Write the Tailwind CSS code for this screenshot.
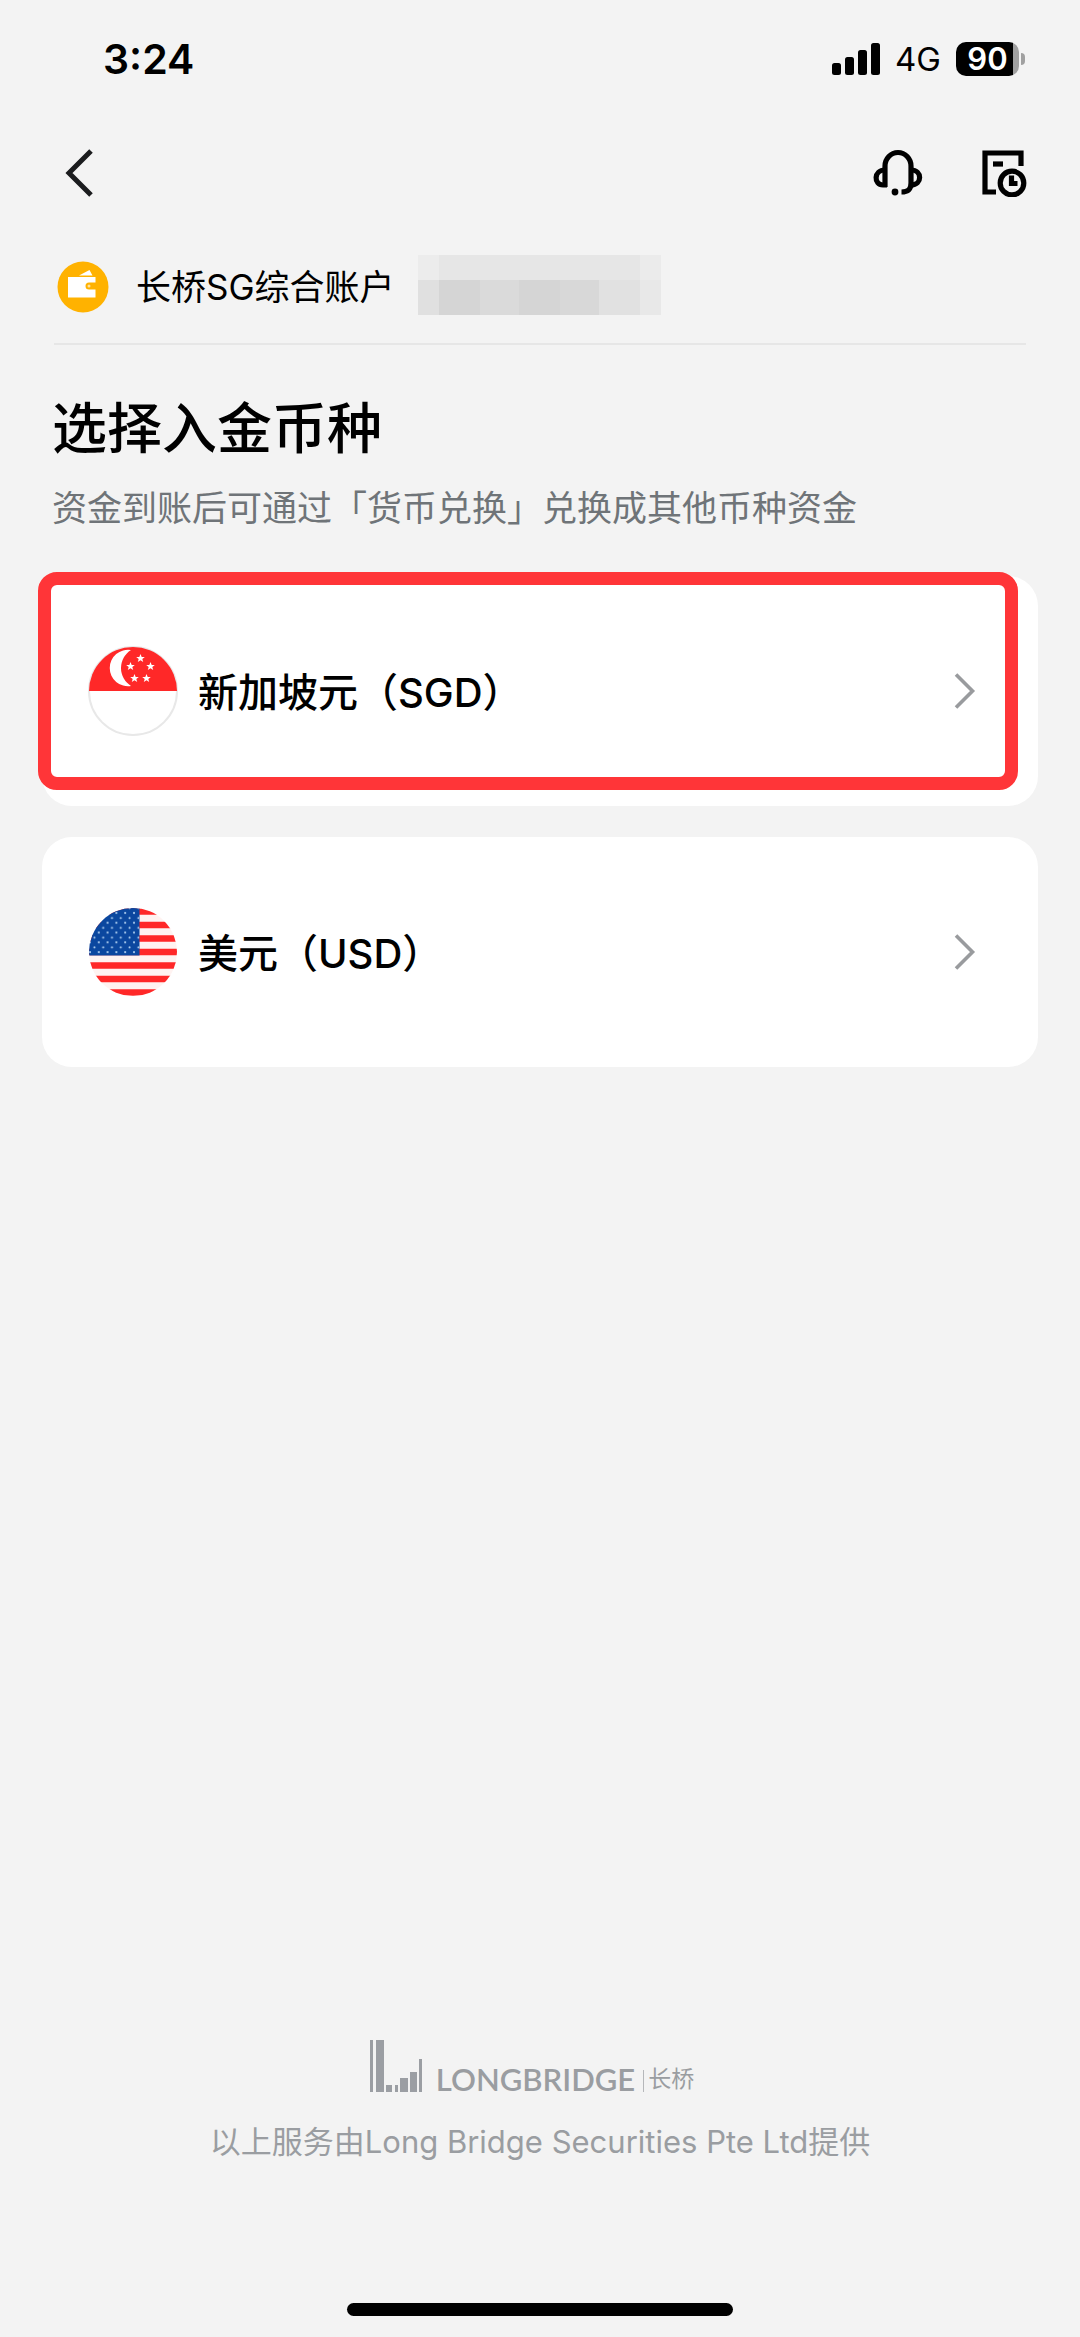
<!DOCTYPE html>
<html lang="zh-CN">
<head>
<meta charset="utf-8">
<meta name="viewport" content="width=device-width, initial-scale=1">
<title>选择入金币种</title>
<script src="https://cdn.jsdelivr.net/npm/@tailwindcss/browser@4"></script>
</head>
<body class="min-h-screen flex flex-col bg-[#f3f3f3] text-black font-['Inter','Noto_Sans_CJK_SC',sans-serif]">
  <!-- Status bar -->
  <div class="h-[118px] pl-[103px] pr-[55px] flex items-center justify-between">
    <span class="text-[41px] leading-[50px] font-semibold">3:24</span>
    <div class="flex items-center gap-[15px]">
      <svg class="w-12 h-8" viewBox="0 0 48 32" aria-hidden="true">
        <rect x="0" y="20" width="9" height="12" rx="2.5"/><rect x="13" y="14" width="9" height="18" rx="2.5"/><rect x="26" y="7" width="9" height="25" rx="2.5"/><rect x="39" y="0" width="9" height="32" rx="2.5"/>
      </svg>
      <span class="text-[33px] leading-10">4G</span>
      <div class="flex items-center gap-[2px]">
        <div class="w-[63px] h-[34px] rounded-[10px] flex items-center justify-center text-white text-[31px] leading-[34px] font-semibold bg-linear-to-r from-black from-90% to-[#a0a0a0] to-90%">90</div>
        <div class="w-1 h-3 rounded-r-full bg-[#a0a0a0]"></div>
      </div>
    </div>
  </div>

  <!-- Navigation bar -->
  <header class="h-[110px] pl-16 pr-[53px] flex items-center justify-between">
    <button type="button" aria-label="返回">
      <svg class="w-8 h-12" viewBox="0 0 32 48" fill="none" stroke="#1b1c1e" stroke-width="5"><path d="M27 2 L5 24 L27 46"/></svg>
    </button>
    <div class="flex items-center gap-[58px]">
      <button type="button" aria-label="客服">
        <svg class="w-[50px] h-12" viewBox="0 0 50 48" fill="none" stroke="#000" stroke-width="5.200">
          <path d="M12 38 V17 A13 13.500 0 0 1 38 17 V34 C38 40 35.500 43 28.500 43"/>
          <path d="M12 21 C0.500 21 0.500 36 10 36 H14"/><path d="M38 21 C49.500 21 49.500 36 38 36"/>
          <circle cx="22" cy="43" r="3.400" fill="#000" stroke="none"/>
        </svg>
      </button>
      <button type="button" aria-label="入金记录">
        <svg class="w-[46px] h-12" viewBox="0 0 46 48" fill="none" stroke="#000" stroke-width="5.200">
          <path d="M15 43 H4 V4 H40 V17"/><path d="M12 15 H22"/>
          <circle cx="31" cy="34" r="11.800"/><path d="M30.500 26.500 V34.500 H36.500"/>
        </svg>
      </button>
    </div>
  </header>

  <main class="px-[42px]">
    <!-- Account -->
    <section class="mx-3 h-[117px] pl-[3px] pt-[27px] flex items-start border-b-2 border-[#e6e6e6]">
      <div class="h-16 flex items-center">
        <svg class="w-[52px] h-[52px]" viewBox="0 0 52 52" aria-hidden="true">
          <circle cx="26" cy="26" r="25.500" fill="#ffb200"/>
          <path d="M22 14.500 L32.500 9 L35.500 14.500 Z M11 16 H38.500 V21.500 H32 A3.400 3.400 0 0 0 32 28.500 H38.500 V36.500 H11 Z" fill="#fff"/>
          <circle cx="32" cy="25" r="1.500" fill="#ffe2a0"/>
        </svg>
        <span class="ml-[27px] text-[35px] leading-[60px]">长桥SG综合账户</span>
      </div>
      <svg class="ml-[23px] w-[243px] h-[60px]" viewBox="0 0 243 60" aria-hidden="true">
        <rect width="243" height="60" fill="#e6e6e6"/>
        <rect width="21" height="25" fill="#ececec"/><rect x="222" width="21" height="25" fill="#ebebeb"/>
        <rect y="25" width="21" height="35" fill="#e0e0e0"/><rect x="21" y="25" width="41" height="35" fill="#d5d5d5"/><rect x="62" y="25" width="39" height="35" fill="#dadada"/><rect x="101" y="25" width="41" height="35" fill="#d5d5d5"/><rect x="142" y="25" width="39" height="35" fill="#d8d8d8"/><rect x="181" y="25" width="41" height="35" fill="#e1e1e1"/><rect x="222" y="25" width="21" height="35" fill="#e8e8e8"/>
      </svg>
    </section>

    <section class="ml-[10px] pt-[43px]">
      <h1 class="text-[55px] leading-[80px] font-medium">选择入金币种</h1>
      <p class="mt-3 text-[35px] leading-[56px] text-[#6f7478]">资金到账后可通过「货币兑换」兑换成其他币种资金</p>
    </section>

    <!-- Currencies -->
    <div class="mt-10 flex flex-col gap-[31px]">
      <a href="#sgd" class="relative h-[230px] rounded-[30px] bg-white pl-[46px] pr-[60px] flex items-center text-[40px] font-medium">
        <svg class="w-[90px] h-[90px]" viewBox="0 0 90 90" aria-hidden="true">
          <circle cx="45" cy="45" r="44" fill="#fff" stroke="#e8e8e8" stroke-width="2"/>
          <path d="M1 45 A44 44 0 0 1 89 45 Z" fill="#ff2828"/>
          <path d="M43 4 A18.250 18.250 0 1 0 43 40 A21.200 21.200 0 0 1 43 4 Z" fill="#fff"/>
          <g fill="#fff">
            <path id="star" d="M52.500 8 L53.700 11 H56.800 L54.300 13 L55.200 16 L52.500 14.200 L49.800 16 L50.700 13 L48.200 11 H51.300 Z"/>
            <use href="#star" x="-10" y="8"/><use href="#star" x="10" y="8"/><use href="#star" x="-6" y="20"/><use href="#star" x="6" y="20"/>
          </g>
        </svg>
        <span class="ml-5 pt-1 leading-[60px]">新加坡元（SGD）</span>
        <svg class="ml-auto w-6 h-9" viewBox="0 0 24 36" fill="none" stroke="#999b9e" stroke-width="3.600"><path d="M2 1.500 L18.500 18 L2 34.500"/></svg>
        <span class="absolute -left-1 -top-1 right-5 bottom-4 border-[13px] border-[#ff3538] rounded-[19px]"></span>
      </a>
      <a href="#usd" class="h-[230px] rounded-[30px] bg-white pl-[46px] pr-[60px] flex items-center text-[40px] font-medium">
        <svg class="w-[90px] h-[90px]" viewBox="0 0 90 90" aria-hidden="true">
          <defs>
            <clipPath id="disc"><circle cx="45" cy="45" r="44"/></clipPath>
            <pattern id="dots" width="8.800" height="9.800" patternUnits="userSpaceOnUse"><circle cx="2" cy="6" r="1" fill="#bcd9f5"/><circle cx="6.400" cy="1.200" r="1" fill="#bcd9f5"/></pattern>
          </defs>
          <g clip-path="url(#disc)">
            <rect width="90" height="90" fill="#fff3f1"/>
            <path d="M0 4.500H90M0 18H90M0 31.500H90M0 45H90M0 58.500H90M0 72H90M0 85.500H90" stroke="#ff2828" stroke-width="6.700"/>
            <rect width="51.500" height="48.500" fill="#0b479f"/><rect width="51.500" height="48.500" fill="url(#dots)"/>
          </g>
        </svg>
        <span class="ml-5 pt-1 leading-[60px]">美元（USD）</span>
        <svg class="ml-auto w-6 h-9" viewBox="0 0 24 36" fill="none" stroke="#999b9e" stroke-width="3.600"><path d="M2 1.500 L18.500 18 L2 34.500"/></svg>
      </a>
    </div>
  </main>

  <footer class="mt-auto flex flex-col items-center text-[#9a9da1]">
    <div class="flex items-end mr-4">
      <svg class="w-[52px] h-[52px]" viewBox="0 0 52 52" fill="#9b9ea3" aria-hidden="true">
        <rect width="3" height="52"/><rect x="6" width="8" height="52"/><rect x="16" y="45" width="6" height="7"/><rect x="25" y="45" width="3" height="7"/><rect x="30" y="38" width="8" height="14"/><rect x="40" y="32" width="7" height="20"/><rect x="49" y="19" width="3" height="33"/>
      </svg>
      <span class="ml-[14px] pb-[2px] leading-[22px] text-[31px] font-['Lato',sans-serif] font-semibold">LONGBRIDGE</span>
      <span class="ml-2 w-px h-[22px] bg-[#b5b7ba]"></span>
      <span class="ml-1 pb-[2px] leading-[22px] text-[23px]">长桥</span>
    </div>
    <p class="mt-7 text-[31px] leading-[44px]">以上服务由Long Bridge Securities Pte Ltd提供</p>
    <div class="mt-[139px] mb-[21px] w-[386px] h-[13px] rounded-full bg-black"></div>
  </footer>
</body>
</html>
